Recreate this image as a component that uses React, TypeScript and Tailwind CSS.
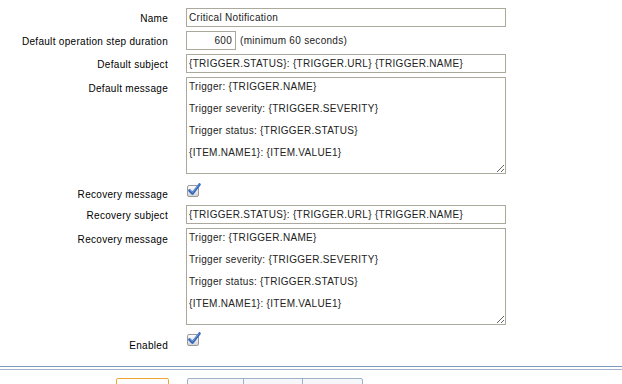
import React from 'react';

const font = { fontFamily: '"Liberation Sans", Arial, sans-serif' };

const MESSAGE =
  'Trigger: {TRIGGER.NAME}\n\nTrigger severity: {TRIGGER.SEVERITY}\n\nTrigger status: {TRIGGER.STATUS}\n\n{ITEM.NAME1}: {ITEM.VALUE1}';
const SUBJECT = '{TRIGGER.STATUS}: {TRIGGER.URL} {TRIGGER.NAME}';

function CheckMark() {
  return (
    <svg width="16" height="15" viewBox="0 0 16 15">
      <defs>
        <linearGradient id="cbg" x1="0" y1="0" x2="0" y2="1">
          <stop offset="0" stopColor="#ffffff" />
          <stop offset="1" stopColor="#d4d4d4" />
        </linearGradient>
      </defs>
      <rect x="1.5" y="3.5" width="11" height="11" rx="1.5" fill="url(#cbg)" stroke="#9a9a9a" />
      <path d="M3.5 8.5 L6.5 11.5 L13.5 2.5" fill="none" stroke="#2f62b8" strokeWidth="2.6" strokeLinecap="round" strokeLinejoin="round" />
      <path d="M4 8.3 L6.5 10.6 L12.8 2.6" fill="none" stroke="#7fa8e6" strokeWidth="0.9" strokeLinecap="round" />
    </svg>
  );
}

function Row({ label, labelPad = 'pt-[4px]', children }: { label: string; labelPad?: string; children: React.ReactNode }) {
  return (
    <div className="flex">
      <div className={`w-[168px] shrink-0 text-right text-[10px] leading-[13px] tracking-[0.3px] text-black ${labelPad}`}>{label}</div>
      <div className="ml-[18px] flex-1">{children}</div>
    </div>
  );
}

function TextInput({ value }: { value: string }) {
  return (
    <div className="h-[19px] w-[320px] border border-[#aaa99b] bg-white px-[2px] text-[10px] leading-[17px] tracking-[0.3px] text-[#222]">
      {value}
    </div>
  );
}

function Message() {
  return (
    <textarea
      readOnly
      defaultValue={MESSAGE}
      className="block h-[97px] w-[320px] resize border border-[#aaa99b] bg-white px-[2px] pt-[3px] text-[10px] leading-[11px] tracking-[0.3px] text-[#222] outline-none"
      style={font}
    />
  );
}

export default function App() {
  return (
    <div className="min-h-[384px] bg-white" style={font}>
      <div className="flex flex-col gap-[4px] pt-[8px]">
        <Row label="Name">
          <TextInput value="Critical Notification" />
        </Row>
        <Row label="Default operation step duration">
          <div className="flex items-center">
            <div className="h-[19px] w-[50px] border border-[#aaa99b] bg-white px-[3px] text-right text-[10px] leading-[17px] tracking-[0.3px] text-[#222]">
              600
            </div>
            <span className="ml-[4px] text-[10px] tracking-[0.3px] text-[#222]">(minimum 60 seconds)</span>
          </div>
        </Row>
        <Row label="Default subject">
          <TextInput value={SUBJECT} />
        </Row>
        <Row label="Default message" labelPad="pt-[5px]">
          <Message />
        </Row>
        <Row label="Recovery message" labelPad="pt-[10px]">
          <div className="h-[23px] pt-[4px]">
            <CheckMark />
          </div>
        </Row>
        <Row label="Recovery subject">
          <TextInput value={SUBJECT} />
        </Row>
        <Row label="Recovery message" labelPad="pt-[5px]">
          <Message />
        </Row>
        <Row label="Enabled" labelPad="pt-[10px]">
          <div className="h-[23px] pt-[2px]">
            <CheckMark />
          </div>
        </Row>
      </div>

      {/* Separator */}
      <div className="mt-[14px] h-[4px] border-t border-b border-t-[#7e9bbd] border-b-[#9fb3cd]" />

      {/* Buttons */}
      <div className="mt-[8px] flex">
        <button className="ml-[116px] h-[22px] w-[53px] rounded-[2px] border border-[#f0a532] bg-[#fdfdfd] text-[10px] tracking-[0.3px] text-[#333]">
          Save
        </button>
        <div className="ml-[18px] flex h-[22px] rounded-[2px] border border-[#9db0ca] bg-[#f5f7fa] text-[10px] tracking-[0.3px] text-[#333]">
          <button className="w-[56px] border-r border-[#9db0ca]">Clone</button>
          <button className="w-[59px] border-r border-[#9db0ca]">Delete</button>
          <button className="w-[59px]">Cancel</button>
        </div>
      </div>
    </div>
  );
}
